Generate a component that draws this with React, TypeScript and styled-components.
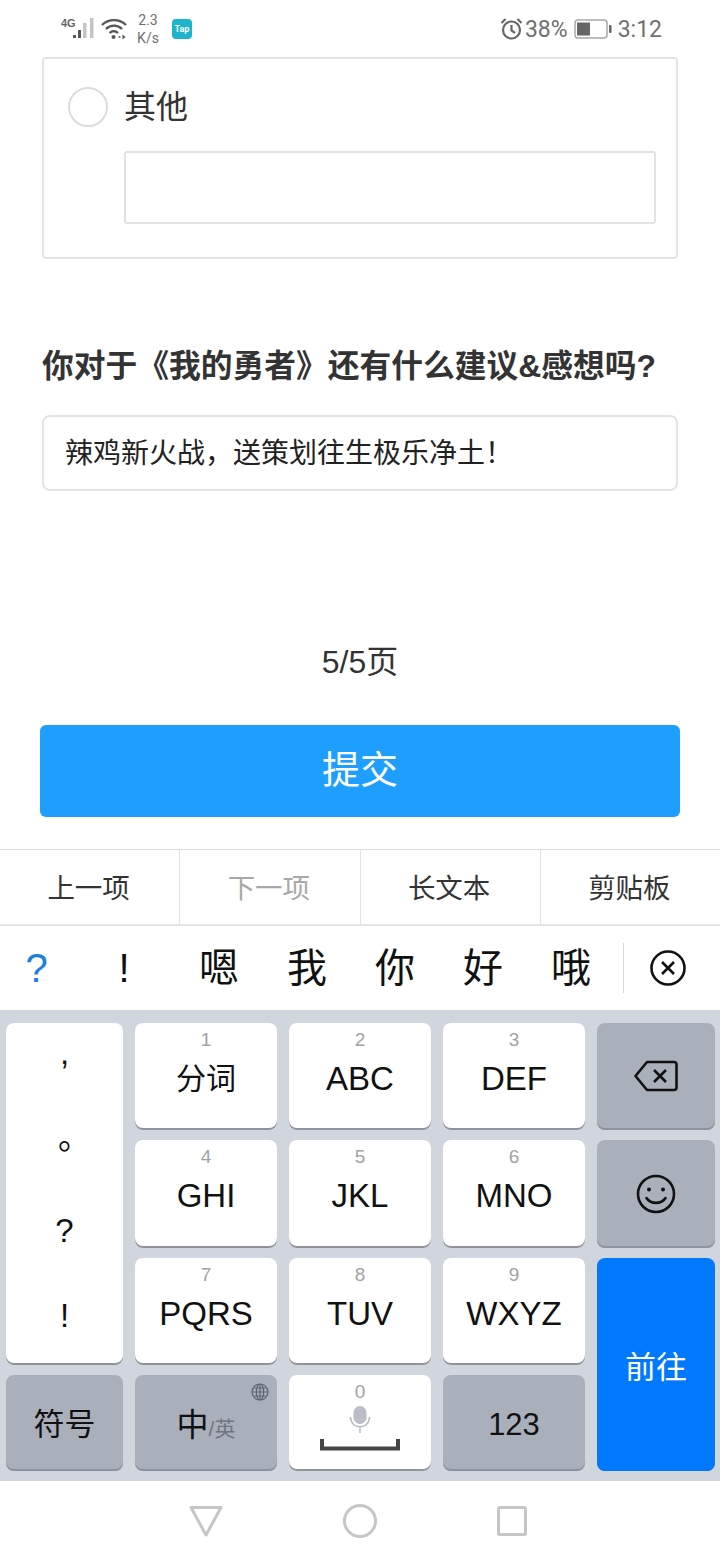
import styled, { createGlobalStyle } from "styled-components"

const Global = createGlobalStyle`
  html, body { margin: 0; padding: 0; background: #fff; }
  body { font-family: "Liberation Sans", "Noto Sans CJK SC", sans-serif; }
  * { box-sizing: border-box; }
`

const Screen = styled.div`
  width: 720px;
  height: 1560px;
  display: flex;
  flex-direction: column;
  overflow: hidden;
  background: #fff;
`

/* status bar */
const StatusBar = styled.div`
  height: 57px;
  padding: 12px 58px 0 61px;
  display: flex;
  justify-content: space-between;
  color: #6f6f6f;
  font-family: Roboto, "Liberation Sans", sans-serif;
`
const StatusSide = styled.div`
  display: flex;
  align-items: flex-start;
`
const NetSpeed = styled.div`
  width: 28px;
  margin: -1px 10px 0 7px;
  font-size: 14px;
  line-height: 18px;
  text-align: center;
`
const TapBadge = styled.div`
  width: 20px;
  height: 20px;
  margin-top: 7px;
  border-radius: 4px;
  background: #1cb5c9;
  color: #fff;
  font-size: 9px;
  font-weight: 700;
  line-height: 20px;
  text-align: center;
`
const StatusText = styled.span`
  font-size: 23px;
  line-height: 35px;
`

/* survey */
const Survey = styled.div`
  padding: 0 42px;
`
const OtherCard = styled.div`
  height: 202px;
  padding: 28px 20px 0 24px;
  border: 2px solid #e4e4e4;
  border-radius: 4px;
`
const OptionRow = styled.div`
  display: flex;
  align-items: center;
  gap: 16px;
`
const Radio = styled.div`
  width: 40px;
  height: 40px;
  border: 2px solid #dcdcdc;
  border-radius: 50%;
`
const OptionLabel = styled.div`
  font-size: 32px;
  line-height: 40px;
  color: #333;
`
const OtherInput = styled.div`
  height: 73px;
  margin: 24px 0 0 56px;
  border: 2px solid #e2e2e2;
  border-radius: 3px;
`
const Question = styled.div`
  margin-top: 86px;
  font-size: 31.750px;
  line-height: 42px;
  font-weight: 700;
  color: #333;
  white-space: nowrap;
`
const Answer = styled.div`
  height: 76px;
  margin-top: 28px;
  padding-left: 21px;
  border: 2px solid #e4e4e4;
  border-radius: 8px;
  font-size: 28px;
  line-height: 73px;
  color: #222;
`
const PageCount = styled.div`
  margin-top: 150px;
  font-size: 32px;
  line-height: 42px;
  color: #333;
  text-align: center;
`
const Submit = styled.div`
  height: 92px;
  margin: 42px -2px 0;
  border-radius: 6px;
  background: #1e9fff;
  color: #fff;
  font-size: 38px;
  line-height: 90px;
  text-align: center;
`

/* keyboard toolbar */
const Toolbar = styled.div`
  height: 77px;
  margin-top: 32px;
  display: flex;
  border-top: 1px solid #dedede;
  border-bottom: 2px solid #e6e6e6;
`
const ToolItem = styled.div<{ $muted?: boolean }>`
  flex: 1;
  padding-right: 2px;
  border-right: 1px solid #e2e2e2;
  font-size: 27.500px;
  line-height: 78px;
  text-align: center;
  color: ${p => (p.$muted ? "#a8a8a8" : "#333")};
  &:last-child { border-right: 0; }
`
const Candidates = styled.div`
  height: 84px;
  display: flex;
  align-items: center;
`
const Candidate = styled.div<{ $active?: boolean; $w?: number }>`
  width: ${p => p.$w ?? 88}px;
  font-size: 40px;
  line-height: 84px;
  text-align: center;
  color: ${p => (p.$active ? "#1a7fe0" : "#111")};
`
const CandidateClear = styled.div`
  width: 89px;
  height: 50px;
  margin-left: 8px;
  border-left: 1px solid #d8d8d8;
  display: flex;
  align-items: center;
  justify-content: center;
`

/* keyboard */
const Keyboard = styled.div`
  height: 471px;
  padding: 13px 5px 0 6px;
  background: #d1d5de;
  display: grid;
  grid-template-columns: 117px 142px 142px 142px 118px;
  grid-template-rows: 107px 108px 107px 96px;
  column-gap: 12px;
  row-gap: 10px;
`
const Key = styled.div<{ $tone?: "white" | "gray" | "blue" }>`
  position: relative;
  border-radius: 8px;
  display: flex;
  flex-direction: column;
  align-items: center;
  background: ${p => (p.$tone === "gray" ? "#a9b0bc" : p.$tone === "blue" ? "#0079ff" : "#fff")};
  box-shadow: inset 0 -2px 0 ${p => (p.$tone === "gray" ? "#8d939e" : p.$tone === "blue" ? "#0079ff" : "#8f9299")};
  color: #111;
`
const SymbolKey = styled(Key)`
  grid-row: span 3;
  padding-top: 10px;
  justify-content: flex-start;
`
const SymbolChar = styled.div<{ $h: number; $shift?: number }>`
  height: ${p => p.$h}px;
  font-size: 33px;
  line-height: 40px;
  transform: translateX(${p => p.$shift ?? 0}px);
`
const Digit = styled.div`
  margin-top: 6px;
  font-size: 19px;
  line-height: 22px;
  color: #a2a2a2;
`
const Letters = styled.div<{ $cjk?: boolean }>`
  margin-top: 8px;
  font-size: ${p => (p.$cjk ? 30 : 33)}px;
  line-height: 40px;
`
const CenteredKey = styled(Key)<{ $nudge?: number }>`
  justify-content: center;
  font-size: 31px;
  padding-top: ${p => Math.max(p.$nudge ?? 0, 0)}px;
  padding-bottom: ${p => Math.max(-(p.$nudge ?? 0), 0)}px;
`
const EnterKey = styled(CenteredKey)`
  grid-row: span 2;
  color: #fff;
`
const GlobeMark = styled.div`
  position: absolute;
  top: 8px;
  right: 8px;
  display: flex;
`
const LangMain = styled.span`
  font-size: 32px;
`
const LangSub = styled.span`
  font-size: 21px;
  color: #70757f;
`
const SpaceDigit = styled(Digit)`
  margin-bottom: 3px;
`

/* nav bar */
const NavBar = styled.div`
  flex: 1;
  display: flex;
  align-items: center;
  justify-content: center;
  gap: 120px;
  padding: 1px 4px 0 0;
`

const SignalIcon = () => (
  <svg width="34" height="28" viewBox="0 0 34 28" style={{ marginTop: 4 }}>
    <text x="0" y="11" fontSize="11" fontWeight="700" fill="#666" fontFamily="Liberation Sans">4G</text>
    <rect x="12" y="19" width="3" height="3" fill="#555" />
    <rect x="17" y="14" width="3" height="8" fill="#555" />
    <rect x="22" y="7" width="3.500" height="15" fill="#c4c4c4" />
    <rect x="29" y="2" width="3.500" height="20" fill="#c4c4c4" />
  </svg>
)

const WifiIcon = () => (
  <svg width="26" height="24" viewBox="0 0 26 24" fill="none" stroke="#555" strokeWidth="2.400" style={{ marginTop: 5, marginLeft: 6 }}>
    <path d="M1 8c6.500-6.500 17.500-6.500 24 0" />
    <path d="M5 12c4.500-4.500 11.500-4.500 16 0" />
    <path d="M8.500 16c2.500-2.400 6-2.400 8.500 0" />
    <circle cx="12.500" cy="20" r="2" fill="#555" stroke="none" />
    <path d="M17.500 20h2" strokeWidth="1.500" />
    <path d="M21.500 17.500l3 2.500-3 2.500z" fill="#555" stroke="none" />
  </svg>
)

const AlarmIcon = () => (
  <svg width="23" height="24" viewBox="0 0 23 24" fill="none" stroke="#666" strokeWidth="2.200" style={{ marginTop: 5, marginRight: 2 }}>
    <circle cx="11.500" cy="13" r="8.500" />
    <path d="M11.500 8v5.500l3.500 2.500" />
    <path d="M1.500 6l4-4M21.500 6l-4-4" />
  </svg>
)

const BatteryIcon = () => (
  <svg width="38" height="20" viewBox="0 0 38 20" style={{ margin: "7px 6px 0 6px" }}>
    <rect x="1" y="1" width="32" height="18" rx="3" fill="#fff" stroke="#a8a8a8" strokeWidth="1.500" />
    <rect x="3" y="3.500" width="13" height="13" fill="#666" />
    <rect x="35" y="6" width="2.500" height="8" rx="1" fill="#666" />
  </svg>
)

const ClearIcon = () => (
  <svg width="36" height="36" viewBox="0 0 36 36" fill="none" stroke="#111" strokeWidth="2.600">
    <circle cx="18" cy="18" r="16.500" />
    <path d="M12 12l12 12M24 12l-12 12" />
  </svg>
)

const BackspaceIcon = () => (
  <svg width="44" height="32" viewBox="0 0 44 32" fill="none" stroke="#111" strokeWidth="2.600" strokeLinejoin="round" style={{ marginBottom: 2 }}>
    <path d="M13 2h27a2.500 2.500 0 0 1 2.500 2.500v23a2.500 2.500 0 0 1-2.500 2.500H13L1.500 16z" />
    <path d="M20 10l12 12M32 10l-12 12" />
  </svg>
)

const SmileIcon = () => (
  <svg width="40" height="40" viewBox="0 0 40 40" fill="none" stroke="#111" strokeWidth="2.600">
    <circle cx="20" cy="20" r="18" />
    <circle cx="13" cy="15.500" r="2" fill="#111" stroke="none" />
    <circle cx="27" cy="15.500" r="2" fill="#111" stroke="none" />
    <path d="M10.500 24c4 6.500 15 6.500 19 0" strokeLinecap="round" />
  </svg>
)

const GlobeIcon = () => (
  <svg width="18" height="18" viewBox="0 0 18 18" fill="none" stroke="#5f6570" strokeWidth="1.200">
    <circle cx="9" cy="9" r="8" />
    <ellipse cx="9" cy="9" rx="3.600" ry="8" />
    <path d="M9 1v16M1 9h16M2.200 5h13.600M2.200 13h13.600" />
  </svg>
)

const MicSpaceIcon = () => (
  <svg width="80" height="46" viewBox="0 0 80 46" fill="none">
    <rect x="33.500" y="0" width="13" height="18" rx="6.500" fill="#b9bec7" />
    <path d="M30.500 11c0 13 19 13 19 0M40 21v6" stroke="#b9bec7" strokeWidth="1.600" />
    <path d="M2 33v9.500h76V33" stroke="#444" strokeWidth="4" />
  </svg>
)

const NavBack = () => (
  <svg width="34" height="32" viewBox="0 0 34 32" fill="none" stroke="#c6c6c6" strokeWidth="3" strokeLinejoin="round">
    <path d="M2 2.500h30L17 30z" />
  </svg>
)

const NavHome = () => (
  <svg width="34" height="34" viewBox="0 0 34 34" fill="none" stroke="#c6c6c6" strokeWidth="3">
    <circle cx="17" cy="17" r="15.500" />
  </svg>
)

const NavRecent = () => (
  <svg width="30" height="30" viewBox="0 0 30 30" fill="none" stroke="#c6c6c6" strokeWidth="3" strokeLinejoin="round">
    <rect x="1.500" y="1.500" width="27" height="27" rx="1.500" />
  </svg>
)

const letterKeys = [
  ["1", "分词"], ["2", "ABC"], ["3", "DEF"],
  ["4", "GHI"], ["5", "JKL"], ["6", "MNO"],
  ["7", "PQRS"], ["8", "TUV"], ["9", "WXYZ"],
]

const LetterKey = ({ digit, label }: { digit: string; label: string }) => (
  <Key>
    <Digit>{digit}</Digit>
    <Letters $cjk={digit === "1"}>{label}</Letters>
  </Key>
)

const App = () => (
  <Screen>
    <Global />
    <StatusBar>
      <StatusSide>
        <SignalIcon />
        <WifiIcon />
        <NetSpeed>2.3<br />K/s</NetSpeed>
        <TapBadge>Tap</TapBadge>
      </StatusSide>
      <StatusSide>
        <AlarmIcon />
        <StatusText>38%</StatusText>
        <BatteryIcon />
        <StatusText>3:12</StatusText>
      </StatusSide>
    </StatusBar>

    <Survey>
      <OtherCard>
        <OptionRow>
          <Radio />
          <OptionLabel>其他</OptionLabel>
        </OptionRow>
        <OtherInput />
      </OtherCard>
      <Question>你对于《我的勇者》还有什么建议&amp;感想吗?</Question>
      <Answer>辣鸡新火战，送策划往生极乐净土！</Answer>
      <PageCount>5/5页</PageCount>
      <Submit>提交</Submit>
    </Survey>

    <Toolbar>
      <ToolItem>上一项</ToolItem>
      <ToolItem $muted>下一项</ToolItem>
      <ToolItem>长文本</ToolItem>
      <ToolItem>剪贴板</ToolItem>
    </Toolbar>
    <Candidates>
      <Candidate $active $w={73}>?</Candidate>
      <Candidate $w={102}>!</Candidate>
      <Candidate>嗯</Candidate>
      <Candidate>我</Candidate>
      <Candidate>你</Candidate>
      <Candidate>好</Candidate>
      <Candidate>哦</Candidate>
      <CandidateClear><ClearIcon /></CandidateClear>
    </Candidates>

    <Keyboard>
      <SymbolKey>
        <SymbolChar $h={85}>,</SymbolChar>
        <SymbolChar $h={93} $shift={10}>。</SymbolChar>
        <SymbolChar $h={85}>?</SymbolChar>
        <SymbolChar $h={40}>!</SymbolChar>
      </SymbolKey>
      {letterKeys.slice(0, 3).map(([d, l]) => <LetterKey key={d} digit={d} label={l} />)}
      <CenteredKey $tone="gray"><BackspaceIcon /></CenteredKey>
      {letterKeys.slice(3, 6).map(([d, l]) => <LetterKey key={d} digit={d} label={l} />)}
      <CenteredKey $tone="gray"><SmileIcon /></CenteredKey>
      {letterKeys.slice(6, 9).map(([d, l]) => <LetterKey key={d} digit={d} label={l} />)}
      <EnterKey $tone="blue">前往</EnterKey>
      <CenteredKey $tone="gray" $nudge={-4}>符号</CenteredKey>
      <CenteredKey $tone="gray" $nudge={-3}>
        <GlobeMark><GlobeIcon /></GlobeMark>
        <div><LangMain>中</LangMain><LangSub>/英</LangSub></div>
      </CenteredKey>
      <Key>
        <SpaceDigit>0</SpaceDigit>
        <MicSpaceIcon />
      </Key>
      <CenteredKey $tone="gray" $nudge={3}>123</CenteredKey>
    </Keyboard>

    <NavBar>
      <NavBack />
      <NavHome />
      <NavRecent />
    </NavBar>
  </Screen>
)

export default App
